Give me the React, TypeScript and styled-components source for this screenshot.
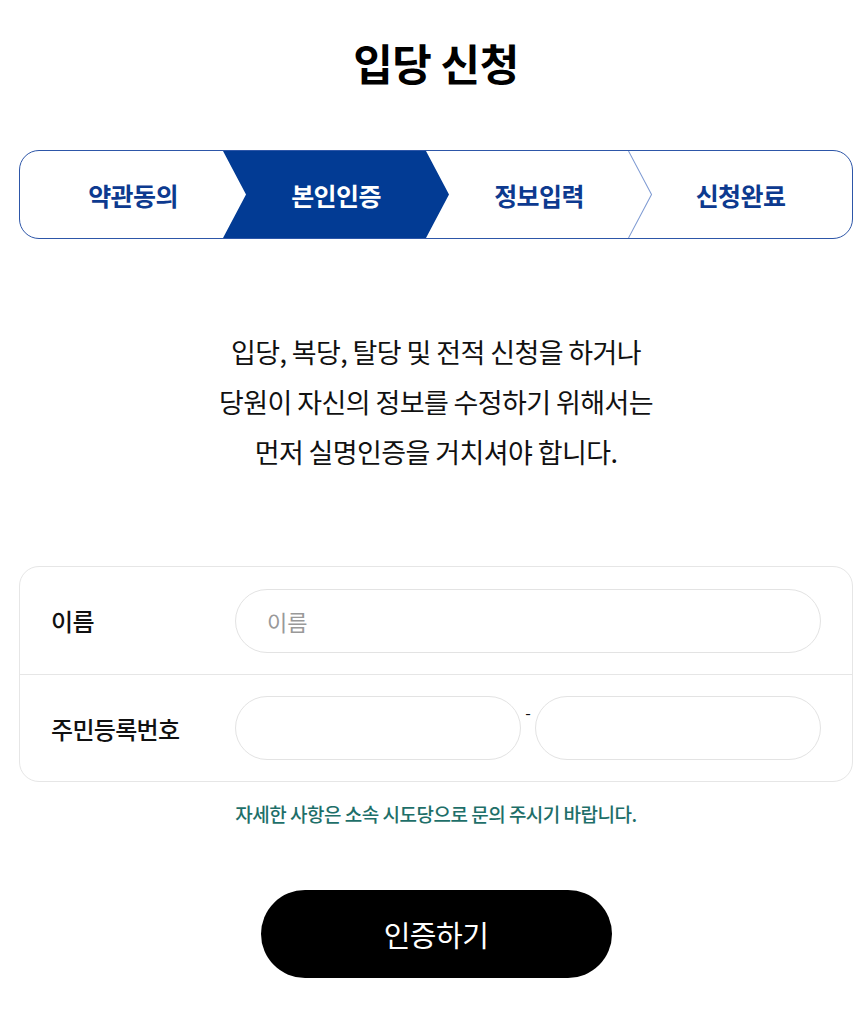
import styled, { createGlobalStyle } from "styled-components";

const GlobalStyle = createGlobalStyle`
  body {
    margin: 0;
    background: #fff;
    font-family: "Noto Sans CJK KR", "Noto Sans", sans-serif;
    color: #111;
  }
  * {
    box-sizing: border-box;
  }
`;

const Page = styled.div`
  width: 834px;
  margin-left: 19px;
  padding-top: 39px;
  padding-bottom: 48px;
  display: flex;
  flex-direction: column;
  align-items: center;
`;

const Title = styled.h1`
  margin: 0;
  font-size: 43px;
  line-height: 46px;
  font-weight: 700;
  color: #000;
  letter-spacing: -0.5px;
`;

const StepBar = styled.ol`
  list-style: none;
  margin: 65px 0 0;
  padding: 0;
  width: 100%;
  height: 89px;
  display: flex;
  border: 1.5px solid #2d56a8;
  border-radius: 20px;
  overflow: hidden;
`;

const Step = styled.li<{ $active?: boolean; $first?: boolean; $last?: boolean }>`
  position: relative;
  flex: ${(p) => (p.$last ? "1" : "0 0 226px")};
  margin-left: ${(p) => (p.$first ? "0" : "-23px")};
  display: flex;
  align-items: center;
  justify-content: center;
  font-size: 25px;
  font-weight: 700;
  letter-spacing: -0.6px;
  color: ${(p) => (p.$active ? "#fff" : "#0d3a8f")};
  background: ${(p) => (p.$active ? "#023b94" : "transparent")};
  clip-path: ${(p) =>
    p.$active
      ? "polygon(0 0, calc(100% - 23px) 0, 100% 50%, calc(100% - 23px) 100%, 0 100%, 23px 50%)"
      : "none"};
`;

const Divider = styled.svg`
  position: absolute;
  top: 0;
  right: 0;
  width: 24px;
  height: 100%;
`;

const Intro = styled.p`
  margin: 88px 0 0;
  font-size: 27px;
  line-height: 50px;
  font-weight: 400;
  text-align: center;
  letter-spacing: -0.6px;
  color: #111;
`;

const Form = styled.div`
  margin-top: 89px;
  width: 100%;
  border: 1px solid #e6e6e6;
  border-radius: 20px;
`;

const Row = styled.div<{ $divided?: boolean }>`
  height: 107px;
  display: flex;
  align-items: center;
  padding: 0 31px;
  border-top: ${(p) => (p.$divided ? "1px solid #e6e6e6" : "none")};
`;

const Label = styled.label`
  flex: 0 0 184px;
  font-size: 24px;
  font-weight: 500;
  color: #111;
  letter-spacing: -0.7px;
`;

const Fields = styled.div`
  flex: 1;
  min-width: 0;
  display: flex;
  align-items: center;
`;

const Input = styled.input`
  flex: 1 1 0;
  width: 0;
  min-width: 0;
  height: 64px;
  border: 1px solid #e3e3e3;
  border-radius: 32px;
  padding: 0 31px;
  font-family: inherit;
  font-size: 22px;
  color: #111;
  background: #fff;
  outline: none;
  &::placeholder {
    color: #999;
  }
`;

const Dash = styled.span`
  flex: 0 0 14px;
  text-align: center;
  font-size: 16px;
  line-height: 16px;
  align-self: flex-start;
  margin-top: 8px;
  color: #111;
`;

const Help = styled.p`
  margin: 20px 0 0;
  font-size: 19px;
  line-height: 24px;
  font-weight: 500;
  color: #1e6f69;
  letter-spacing: -0.5px;
`;

const SubmitButton = styled.button`
  margin-top: 64px;
  width: 351px;
  height: 88px;
  border: none;
  border-radius: 44px;
  background: #000;
  color: #fff;
  font-family: inherit;
  font-size: 29px;
  font-weight: 400;
  letter-spacing: -0.5px;
  cursor: pointer;
`;

const steps = ["약관동의", "본인인증", "정보입력", "신청완료"];
const activeIndex = 1;

export default function App() {
  return (
    <>
      <GlobalStyle />
      <Page>
        <Title>입당 신청</Title>
        <StepBar>
          {steps.map((s, i) => (
            <Step
              key={s}
              $active={i === activeIndex}
              $first={i === 0}
              $last={i === steps.length - 1}
            >
              {s}
              {i > activeIndex && i < steps.length - 1 && (
                <Divider viewBox="0 0 24 86" preserveAspectRatio="none">
                  <polyline
                    points="0.5,0 23.5,43 0.5,86"
                    fill="none"
                    stroke="#7f9bd3"
                    strokeWidth="1"
                  />
                </Divider>
              )}
            </Step>
          ))}
        </StepBar>
        <Intro>
          입당, 복당, 탈당 및 전적 신청을 하거나
          <br />
          당원이 자신의 정보를 수정하기 위해서는
          <br />
          먼저 실명인증을 거치셔야 합니다.
        </Intro>
        <Form>
          <Row>
            <Label>이름</Label>
            <Fields>
              <Input placeholder="이름" />
            </Fields>
          </Row>
          <Row $divided>
            <Label>주민등록번호</Label>
            <Fields>
              <Input />
              <Dash>-</Dash>
              <Input type="password" />
            </Fields>
          </Row>
        </Form>
        <Help>자세한 사항은 소속 시도당으로 문의 주시기 바랍니다.</Help>
        <SubmitButton>인증하기</SubmitButton>
      </Page>
    </>
  );
}
